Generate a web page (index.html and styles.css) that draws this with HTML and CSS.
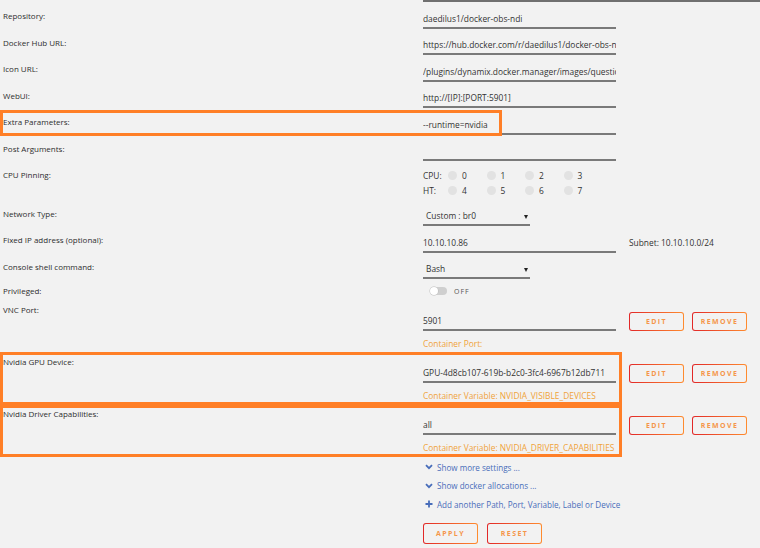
FILE: index.html
```html
<!DOCTYPE html>
<html lang="en">
<head>
    <meta charset="UTF-8">
    <title>Docker Template</title>
    <link rel="stylesheet" href="styles.css">
</head>
<body>
    <div class="page">
        <div class="top-line"></div>

        <div class="row"><div class="label">Repository:</div><div class="field">daedilus1/docker-obs-ndi</div></div>
        <div class="row"><div class="label">Docker Hub URL:</div><div class="field">https://hub.docker.com/r/daedilus1/docker-obs-ndi</div></div>
        <div class="row"><div class="label">Icon URL:</div><div class="field">/plugins/dynamix.docker.manager/images/question.png</div></div>
        <div class="row"><div class="label">WebUI:</div><div class="field">http://[IP]:[PORT:5901]</div></div>
        <div class="row"><div class="label">Extra Parameters:</div><div class="field">--runtime=nvidia</div></div>
        <div class="row"><div class="label">Post Arguments:</div><div class="field"></div></div>

        <div class="row cpu-row">
            <div class="label">CPU Pinning:</div>
            <div class="cpu-grid">
                <div class="cpu-line">
                    <span class="cpu-tag">CPU:</span>
                    <span class="core"><i></i>0</span>
                    <span class="core"><i></i>1</span>
                    <span class="core"><i></i>2</span>
                    <span class="core"><i></i>3</span>
                </div>
                <div class="cpu-line">
                    <span class="cpu-tag">HT:</span>
                    <span class="core"><i></i>4</span>
                    <span class="core"><i></i>5</span>
                    <span class="core"><i></i>6</span>
                    <span class="core"><i></i>7</span>
                </div>
            </div>
        </div>

        <div class="row">
            <div class="label">Network Type:</div>
            <div class="field select"><span>Custom : br0</span><span class="arrow"></span></div>
        </div>
        <div class="row">
            <div class="label">Fixed IP address (optional):</div>
            <div class="field">10.10.10.86</div>
            <div class="subnet">Subnet: 10.10.10.0/24</div>
        </div>
        <div class="row">
            <div class="label">Console shell command:</div>
            <div class="field select"><span>Bash</span><span class="arrow"></span></div>
        </div>
        <div class="row priv-row">
            <div class="label">Privileged:</div>
            <div class="switch"><span class="track"><span class="knob"></span></span><span class="switch-text">OFF</span></div>
        </div>

        <div class="row port-row">
            <div class="label">VNC Port:</div>
            <div class="port-field">
                <div class="field">5901</div>
                <div class="note">Container Port:</div>
            </div>
            <div class="actions"><button class="btn">EDIT</button><button class="btn">REMOVE</button></div>
        </div>
        <div class="row port-row">
            <div class="label">Nvidia GPU Device:</div>
            <div class="port-field">
                <div class="field">GPU-4d8cb107-619b-b2c0-3fc4-6967b12db711</div>
                <div class="note">Container Variable: NVIDIA_VISIBLE_DEVICES</div>
            </div>
            <div class="actions"><button class="btn">EDIT</button><button class="btn">REMOVE</button></div>
        </div>
        <div class="row port-row">
            <div class="label">Nvidia Driver Capabilities:</div>
            <div class="port-field">
                <div class="field">all</div>
                <div class="note">Container Variable: NVIDIA_DRIVER_CAPABILITIES</div>
            </div>
            <div class="actions"><button class="btn">EDIT</button><button class="btn">REMOVE</button></div>
        </div>

        <div class="links">
            <div class="link">
                <svg width="8" height="6" viewBox="0 0 8 6"><path d="M1 1.2 L4 4.2 L7 1.2" fill="none" stroke="#486dba" stroke-width="1.8"/></svg>
                Show more settings ...
            </div>
            <div class="link">
                <svg width="8" height="6" viewBox="0 0 8 6"><path d="M1 1.2 L4 4.2 L7 1.2" fill="none" stroke="#486dba" stroke-width="1.8"/></svg>
                Show docker allocations ...
            </div>
            <div class="link">
                <svg width="8" height="8" viewBox="0 0 8 8"><path d="M4 0.5 V7.5 M0.5 4 H7.5" fill="none" stroke="#486dba" stroke-width="1.8"/></svg>
                Add another Path, Port, Variable, Label or Device
            </div>
        </div>

        <div class="form-buttons">
            <button class="btn big">APPLY</button>
            <button class="btn big">RESET</button>
        </div>

        <!-- marcações laranja por cima da tela -->
        <div class="mark mark-extra"></div>
        <div class="mark mark-gpu"></div>
        <div class="mark mark-driver"></div>
    </div>
</body>
</html>
```

FILE: styles.css
```css
body {
    margin: 0;
    background-color: #f2f2f2;
    font-family: "Open Sans", "Noto Sans", sans-serif;
    font-size: 8.4px;
    color: #333;
}

.page {
    position: relative;
    width: 760px;
    height: 548px;
    overflow: hidden;
}

.top-line {
    margin-left: 423px;
    height: 2px;
    background-color: #707070;
}

.row {
    display: flex;
    height: 26.5px;
}

.label {
    width: 420px;
    flex-shrink: 0;
    padding-left: 3px;
    padding-top: 8px;
    line-height: 12px;
    font-size: 8px;
    color: #2e2e2e;
}

.field {
    width: 193px;
    height: 26.5px;
    box-sizing: border-box;
    padding-top: 10.5px;
    line-height: 12px;
    border-bottom: 2px solid #7a7a7a;
    white-space: nowrap;
    overflow: hidden;
    flex-shrink: 0;
}

/* selects */
.field.select {
    width: 107px;
    padding-left: 3px;
    padding-right: 2px;
    display: flex;
    justify-content: space-between;
}

.arrow {
    width: 0;
    height: 0;
    margin-top: 5px;
    border-left: 2.5px solid transparent;
    border-right: 2.5px solid transparent;
    border-top: 4px solid #222;
}

.subnet {
    margin-left: 13px;
    padding-top: 10.5px;
    line-height: 12px;
}

/* CPU pinning */
.cpu-row {
    height: 38.5px;
}

.cpu-grid {
    padding-top: 7px;
}

.cpu-line {
    display: flex;
    align-items: center;
    height: 15px;
}

.cpu-tag {
    width: 25px;
}

.core {
    width: 38.5px;
    display: flex;
    align-items: center;
    gap: 5px;
}

.core i {
    width: 9px;
    height: 9px;
    border-radius: 50%;
    background-color: #e2e2e2;
}

/* switch */
.priv-row {
    height: 21px;
}

.priv-row .label {
    padding-top: 6px;
}

.switch {
    display: flex;
    align-items: center;
    margin-left: 7px;
    margin-top: 8px;
    height: 8px;
    gap: 7px;
}

.track {
    width: 17px;
    height: 8px;
    border-radius: 4px;
    background-color: #cfcfcf;
    display: flex;
    align-items: center;
}

.knob {
    width: 8px;
    height: 8px;
    border-radius: 50%;
    background-color: #fff;
    box-shadow: 0 0 0 0.5px #bbb;
}

.switch-text {
    font-size: 7px;
    letter-spacing: 1px;
    color: #555;
}

/* port / variable rows */
.port-row {
    height: 52px;
}

.port-row .label {
    padding-top: 4px;
}

.port-field {
    width: 193px;
    flex-shrink: 0;
}

.port-field .field {
    height: 31px;
    padding-top: 15px;
}

.note {
    margin-top: 7px;
    line-height: 12px;
    color: #f0a23a;
    white-space: nowrap;
}

.actions {
    display: flex;
    gap: 8px;
    margin-left: 13px;
    margin-top: 12px;
}

.btn {
    width: 55px;
    height: 19px;
    padding: 0;
    border: 1.5px solid transparent;
    border-radius: 3px;
    background: linear-gradient(#f2f2f2, #f2f2f2) padding-box,
                linear-gradient(90deg, #e22828, #ff8c2f) border-box;
    color: #f5964a;
    font-family: "Open Sans", sans-serif;
    font-size: 7px;
    font-weight: bold;
    letter-spacing: 1.4px;
}

.btn.big {
    height: 21px;
}

/* links */
.links {
    padding-left: 425px;
    padding-top: 2px;
}

.link {
    display: flex;
    align-items: center;
    gap: 4px;
    height: 18.5px;
    font-size: 8.1px;
    color: #486dba;
}

.form-buttons {
    display: flex;
    gap: 9px;
    margin-left: 423px;
    margin-top: 9.5px;
}

/* orange annotation boxes */
.mark {
    position: absolute;
    left: 0;
    border: 3px solid #ff7f27;
    box-sizing: border-box;
}

.mark-extra {
    top: 110px;
    width: 502px;
    height: 26px;
}

.mark-gpu {
    top: 352px;
    width: 622px;
    height: 53px;
}

.mark-driver {
    top: 405px;
    width: 622px;
    height: 52px;
}
```
